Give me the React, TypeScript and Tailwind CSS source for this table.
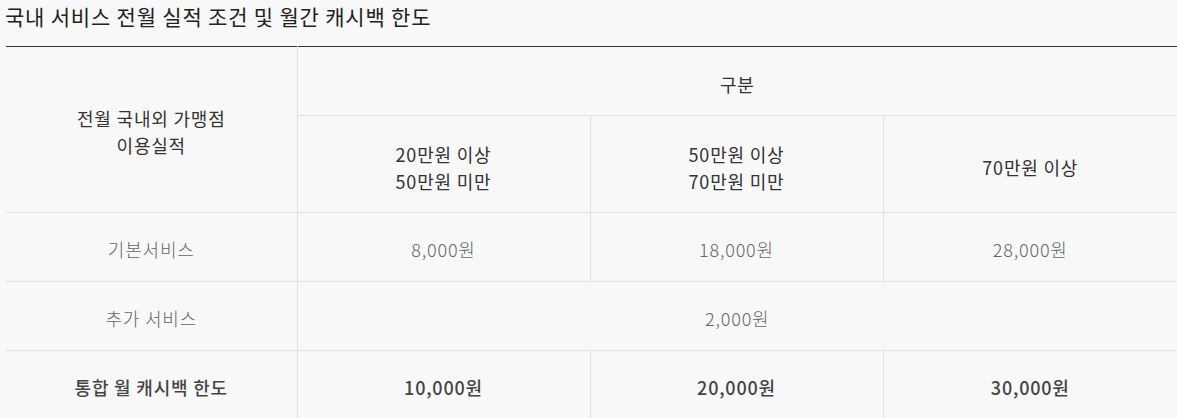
import React from 'react';

const font = { fontFamily: '"Noto Sans CJK KR", "Noto Sans", sans-serif' };

const basic = ['8,000원', '18,000원', '28,000원'];
const total = ['10,000원', '20,000원', '30,000원'];

const App: React.FC = () => {
  return (
    <div className="w-[1177px] h-[418px] bg-[#f8f8f8] overflow-hidden" style={font}>
      <h2 className="h-[46px] pl-[5px] pt-[2px] text-[21px] leading-[28px] text-[#222] font-normal tracking-[0.8px]">
        국내 서비스 전월 실적 조건 및 월간 캐시백 한도
      </h2>
      <table className="ml-[6px] w-[1171px] border-collapse table-fixed text-center text-[18px] tracking-[0.8px]">
        <colgroup>
          <col className="w-[291px]" />
          <col className="w-[293px]" />
          <col className="w-[293px]" />
          <col className="w-[294px]" />
        </colgroup>
        <thead className="text-[#333]">
          <tr className="border-t border-t-[#333]">
            <th rowSpan={2} className="font-normal border-r border-[#e0e0e0] leading-[27px] align-middle pt-[5px]">
              전월 국내외 가맹점
              <br />
              이용실적
            </th>
            <th colSpan={3} className="h-[69px] pt-[6px] font-normal border-b border-[#e0e0e0]">
              구분
            </th>
          </tr>
          <tr className="border-b border-[#e0e0e0]">
            <th className="h-[97px] pt-[7px] font-normal border-r border-[#e0e0e0] leading-[27px]">
              20만원 이상
              <br />
              50만원 미만
            </th>
            <th className="pt-[7px] font-normal border-r border-[#e0e0e0] leading-[27px]">
              50만원 이상
              <br />
              70만원 미만
            </th>
            <th className="pt-[7px] font-normal">70만원 이상</th>
          </tr>
        </thead>
        <tbody className="[&_td]:pt-[5px]">
          <tr className="border-b border-[#e0e0e0] text-[#666]">
            <td className="h-[69px] font-light border-r border-[#e0e0e0]">기본서비스</td>
            {basic.map((v, i) => (
              <td key={v} className={i < 2 ? 'font-light border-r border-[#e0e0e0]' : 'font-light'}>
                {v}
              </td>
            ))}
          </tr>
          <tr className="border-b border-[#e0e0e0] text-[#666]">
            <td className="h-[69px] font-light border-r border-[#e0e0e0]">추가 서비스</td>
            <td colSpan={3} className="font-light">2,000원</td>
          </tr>
          <tr className="text-[#444]">
            <td className="h-[69px] font-medium border-r border-[#e0e0e0]">통합 월 캐시백 한도</td>
            {total.map((v, i) => (
              <td key={v} className={i < 2 ? 'font-medium border-r border-[#e0e0e0]' : 'font-medium'}>
                {v}
              </td>
            ))}
          </tr>
        </tbody>
      </table>
    </div>
  );
};

export default App;
